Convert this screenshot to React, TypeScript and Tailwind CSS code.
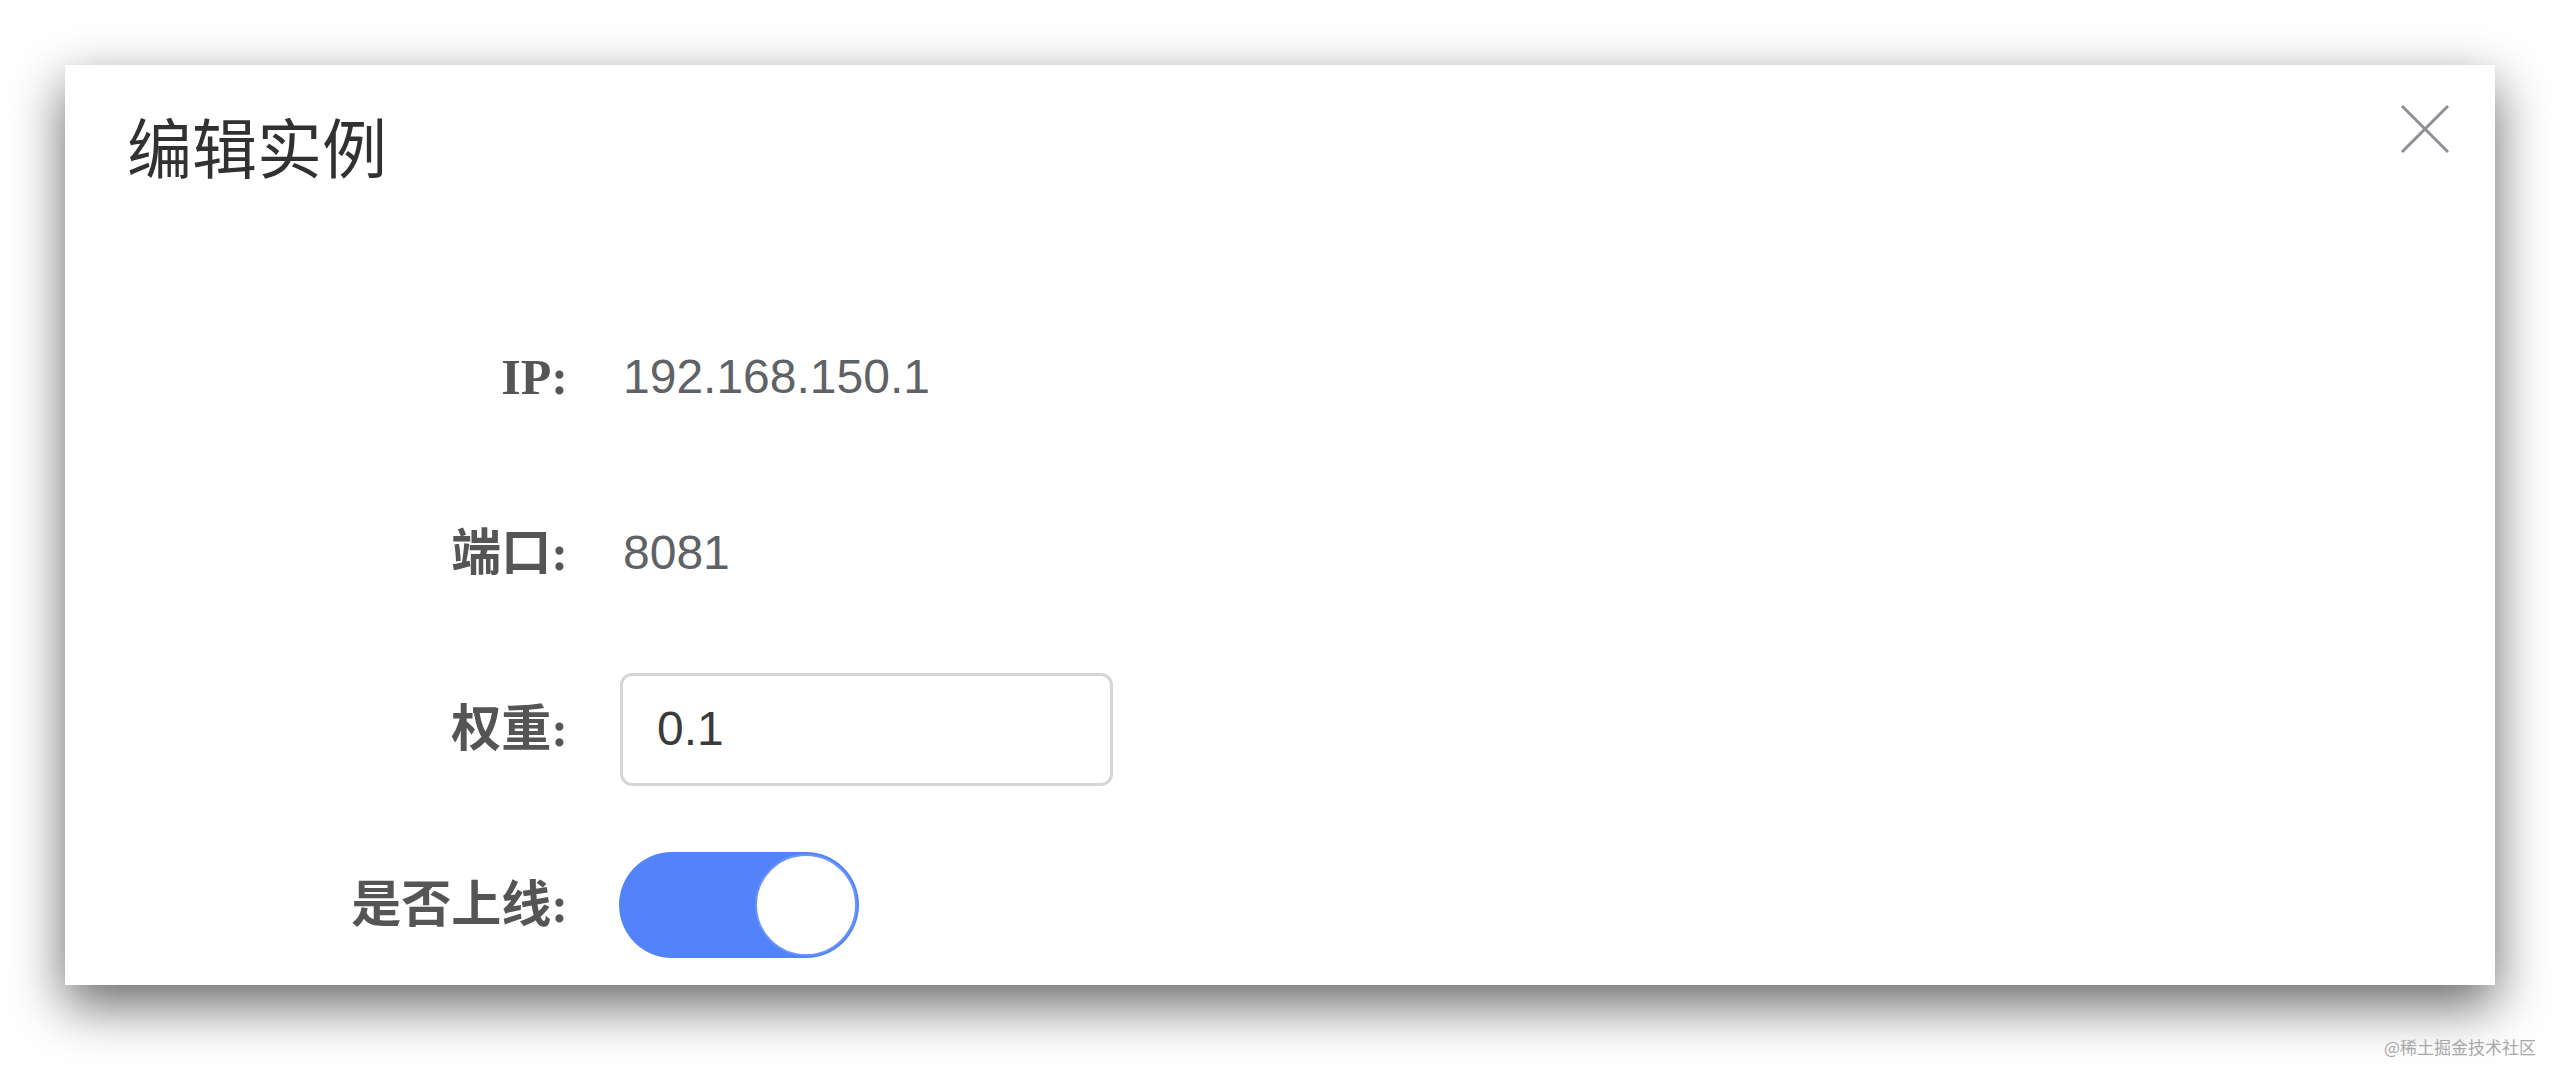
export default function App() {
  const rows: { label: string; kind: "text" | "input" | "switch"; value?: string }[] = [
    { label: "IP:", kind: "text", value: "192.168.150.1" },
    { label: "端口:", kind: "text", value: "8081" },
    { label: "权重:", kind: "input", value: "0.1" },
    { label: "是否上线:", kind: "switch" },
  ];

  return (
    <div className="relative w-full h-[1067px] bg-white pt-[65px] px-[65px] overflow-hidden">
      <div className="relative h-[920px] bg-white shadow-[0_20px_50px_rgba(0,0,0,0.6)]">
        {/* header */}
        <div className="pt-[48px] pl-[62px] h-[112px]">
          <h2 className="text-[65px] leading-[64px] text-[#303133] font-normal font-['Noto_Sans_CJK_SC',sans-serif]">
            {"编辑实例"}
          </h2>
        </div>
        <button className="absolute top-[38px] right-[44px] w-[52px] h-[52px]">
          <svg viewBox="0 0 52 52" width="52" height="52">
            <path d="M3 3 L49 49 M49 3 L3 49" stroke="#8c8f96" strokeWidth="3" fill="none" />
          </svg>
        </button>

        {/* form */}
        <div className="pt-[144px] flex flex-col gap-[64px]">
          {rows.map((r) => (
            <div key={r.label} className="flex items-center h-[112px]">
              <div className="w-[503px] shrink-0 text-right text-[50px] font-bold text-[#555555] font-['Liberation_Serif','Noto_Sans_CJK_SC',serif]">
                {r.label}
              </div>
              <div className="pl-[55px] flex items-center">
                {r.kind === "text" && (
                  <span className="text-[48px] text-[#5f6266] font-['Liberation_Sans','Noto_Sans_CJK_SC',sans-serif]">
                    {r.value}
                  </span>
                )}
                {r.kind === "input" && (
                  <div className="-ml-[3px] w-[493px] h-[113px] border-[3px] border-[#d4d6da] rounded-[12px] flex items-center pl-[34px] text-[48px] text-[#3a3a3a] font-['Liberation_Sans',sans-serif]">
                    {r.value}
                  </div>
                )}
                {r.kind === "switch" && (
                  <div className="-ml-[4px] w-[240px] h-[106px] rounded-full bg-[#5383fb] flex items-center justify-end pr-[2px]">
                    <div className="w-[102px] h-[102px] rounded-full bg-white border-[2px] border-[#6b95fb]" />
                  </div>
                )}
              </div>
            </div>
          ))}
        </div>
      </div>

      <div className="absolute right-[24px] bottom-[8px] text-[17px] text-[#a8a8a8] font-['Noto_Sans_CJK_SC',sans-serif]">
        {"@稀土掘金技术社区"}
      </div>
    </div>
  );
}
